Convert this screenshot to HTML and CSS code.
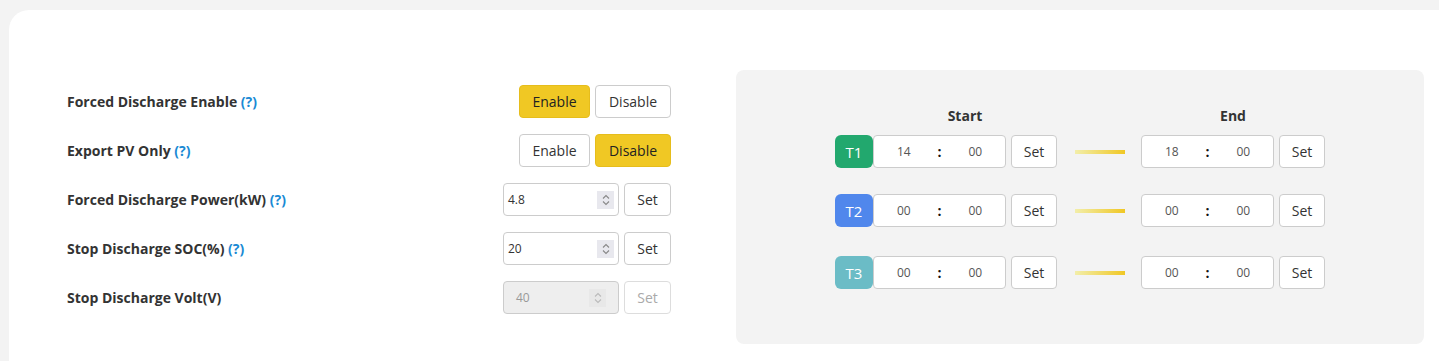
FILE: index.html
```html
<!DOCTYPE html>
<html lang="en">
<head>
  <meta charset="UTF-8" />
  <title>Forced Discharge</title>
  <link rel="stylesheet" href="styles.css">
</head>
<body>

  <div class="card">
    <div class="settings">
      <div class="row">
        <span class="label">Forced Discharge Enable <span class="help">(?)</span></span>
        <div class="controls">
          <button class="btn btn-toggle active">Enable</button>
          <button class="btn btn-toggle">Disable</button>
        </div>
      </div>
      <div class="row">
        <span class="label">Export PV Only <span class="help">(?)</span></span>
        <div class="controls">
          <button class="btn btn-toggle">Enable</button>
          <button class="btn btn-toggle active">Disable</button>
        </div>
      </div>
      <div class="row">
        <span class="label">Forced Discharge Power(kW) <span class="help">(?)</span></span>
        <div class="controls">
          <div class="num-input">
            <span class="num-value">4.8</span>
            <span class="spin"><svg width="10" height="14" viewBox="0 0 10 14"><path d="M2 5.5L5 2.5L8 5.5M2 8.5L5 11.5L8 8.5" fill="none" stroke="currentColor" stroke-width="1.1"/></svg></span>
          </div>
          <button class="btn btn-set">Set</button>
        </div>
      </div>
      <div class="row">
        <span class="label">Stop Discharge SOC(%) <span class="help">(?)</span></span>
        <div class="controls">
          <div class="num-input">
            <span class="num-value">20</span>
            <span class="spin"><svg width="10" height="14" viewBox="0 0 10 14"><path d="M2 5.5L5 2.5L8 5.5M2 8.5L5 11.5L8 8.5" fill="none" stroke="currentColor" stroke-width="1.1"/></svg></span>
          </div>
          <button class="btn btn-set">Set</button>
        </div>
      </div>
      <div class="row">
        <span class="label">Stop Discharge Volt(V)</span>
        <div class="controls">
          <div class="num-input disabled">
            <span class="num-value">40</span>
            <span class="spin"><svg width="10" height="14" viewBox="0 0 10 14"><path d="M2 5.5L5 2.5L8 5.5M2 8.5L5 11.5L8 8.5" fill="none" stroke="currentColor" stroke-width="1.1"/></svg></span>
          </div>
          <button class="btn btn-set disabled">Set</button>
        </div>
      </div>
    </div>

    <div class="schedule">
      <div class="sched">
        <div class="sched-head">
          <span class="head">Start</span>
          <span class="head">End</span>
        </div>

        <div class="slot">
          <div class="tag t1">T1</div>
          <div class="time"><span>14</span><b>:</b><span>00</span></div>
          <button class="btn btn-set">Set</button>
          <div class="bar"></div>
          <div class="time"><span>18</span><b>:</b><span>00</span></div>
          <button class="btn btn-set">Set</button>
        </div>

        <div class="slot">
          <div class="tag t2">T2</div>
          <div class="time"><span>00</span><b>:</b><span>00</span></div>
          <button class="btn btn-set">Set</button>
          <div class="bar"></div>
          <div class="time"><span>00</span><b>:</b><span>00</span></div>
          <button class="btn btn-set">Set</button>
        </div>

        <div class="slot">
          <div class="tag t3">T3</div>
          <div class="time"><span>00</span><b>:</b><span>00</span></div>
          <button class="btn btn-set">Set</button>
          <div class="bar"></div>
          <div class="time"><span>00</span><b>:</b><span>00</span></div>
          <button class="btn btn-set">Set</button>
        </div>
      </div>
    </div>
  </div>

</body>
</html>
```

FILE: styles.css
```css
body {
  font-family: "Open Sans", Arial, sans-serif;
  background-color: #f3f3f3;
  margin: 0;
  padding: 10px 0 0 9px;
  color: #333;
  overflow: hidden;
}
.card {
  background-color: #fff;
  border-radius: 20px 20px 0 0;
  display: flex;
  align-items: flex-start;
  margin-right: -20px;
  padding: 60px 35px 40px 58px;
  min-height: 400px;
}
.settings {
  width: 604px;
  padding-top: 15px;
  display: flex;
  flex-direction: column;
  gap: 16px;
}
.row {
  display: flex;
  justify-content: space-between;
  align-items: center;
  height: 33px;
}
.label {
  font-size: 14px;
  font-weight: bold;
  color: #333;
}
.help {
  color: #1a8ad4;
}
.controls {
  display: flex;
  gap: 5px;
}
.btn {
  font-family: "Open Sans", Arial, sans-serif;
  height: 33px;
  border: 1px solid #ccc;
  border-radius: 4px;
  background-color: #fff;
  color: #333;
  font-size: 14px;
  padding: 0;
  cursor: pointer;
  flex-shrink: 0;
}
.btn-toggle {
  width: 71px;
}
.btn-toggle + .btn-toggle {
  width: 76px;
}
.btn-toggle.active {
  background-color: #f0c824;
  border-color: #e6bd1c;
  color: #222;
}
.btn-set {
  width: 47px;
}
.btn-set.disabled {
  color: #aaa;
  border-color: #ddd;
}
.num-input {
  width: 116px;
  height: 33px;
  box-sizing: border-box;
  border: 1px solid #ccc;
  border-radius: 4px;
  display: flex;
  align-items: center;
  justify-content: space-between;
  padding: 0 4px 0 4px;
  font-size: 12px;
  color: #333;
}
.num-input.disabled {
  background-color: #eee;
  color: #999;
  padding-left: 12px;
  padding-right: 12px;
}
.spin {
  width: 17px;
  height: 18px;
  background-color: #e8e8ee;
  color: #888;
  display: flex;
  align-items: center;
  justify-content: center;
}
.num-input.disabled .spin {
  background-color: #e8e8e8;
  color: #bbb;
}
.schedule {
  flex: 1;
  margin-left: 65px;
  height: 274px;
  box-sizing: border-box;
  background-color: #f3f3f3;
  border-radius: 8px;
  display: flex;
  justify-content: center;
  padding-top: 35px;
}
.sched {
  width: 490px;
}
.sched-head {
  display: flex;
  height: 20px;
  align-items: center;
  padding-left: 38px;
  gap: 84px;
  margin-bottom: 10px;
}
.head {
  width: 184px;
  font-size: 14px;
  font-weight: bold;
  color: #333;
  text-align: center;
}
.slot {
  display: flex;
  align-items: center;
  height: 33px;
}
.slot + .slot {
  margin-top: 26px;
}
.slot:last-child {
  margin-top: 29px;
}
.slot .btn-set {
  width: 46px;
}
.tag {
  width: 38px;
  height: 33px;
  border-radius: 6px;
  color: #fff;
  font-size: 15px;
  display: flex;
  align-items: center;
  justify-content: center;
  flex-shrink: 0;
}
.t1 { background-color: #22a86e; }
.t2 { background-color: #5087ec; }
.t3 { background-color: #6bbcc6; }
.time {
  width: 133px;
  height: 33px;
  box-sizing: border-box;
  background-color: #fff;
  border: 1px solid #ccc;
  border-radius: 4px;
  display: grid;
  grid-template-columns: 1fr 12px 1fr;
  align-items: center;
  text-align: center;
  font-size: 12px;
  color: #555;
  margin-right: 5px;
  flex-shrink: 0;
}
.time b {
  color: #111;
  font-size: 14px;
}
.bar {
  width: 50px;
  height: 4px;
  margin: 0 16px 0 18px;
  background: linear-gradient(to right, #f2eeaa, #f0c724);
  flex-shrink: 0;
}
```
